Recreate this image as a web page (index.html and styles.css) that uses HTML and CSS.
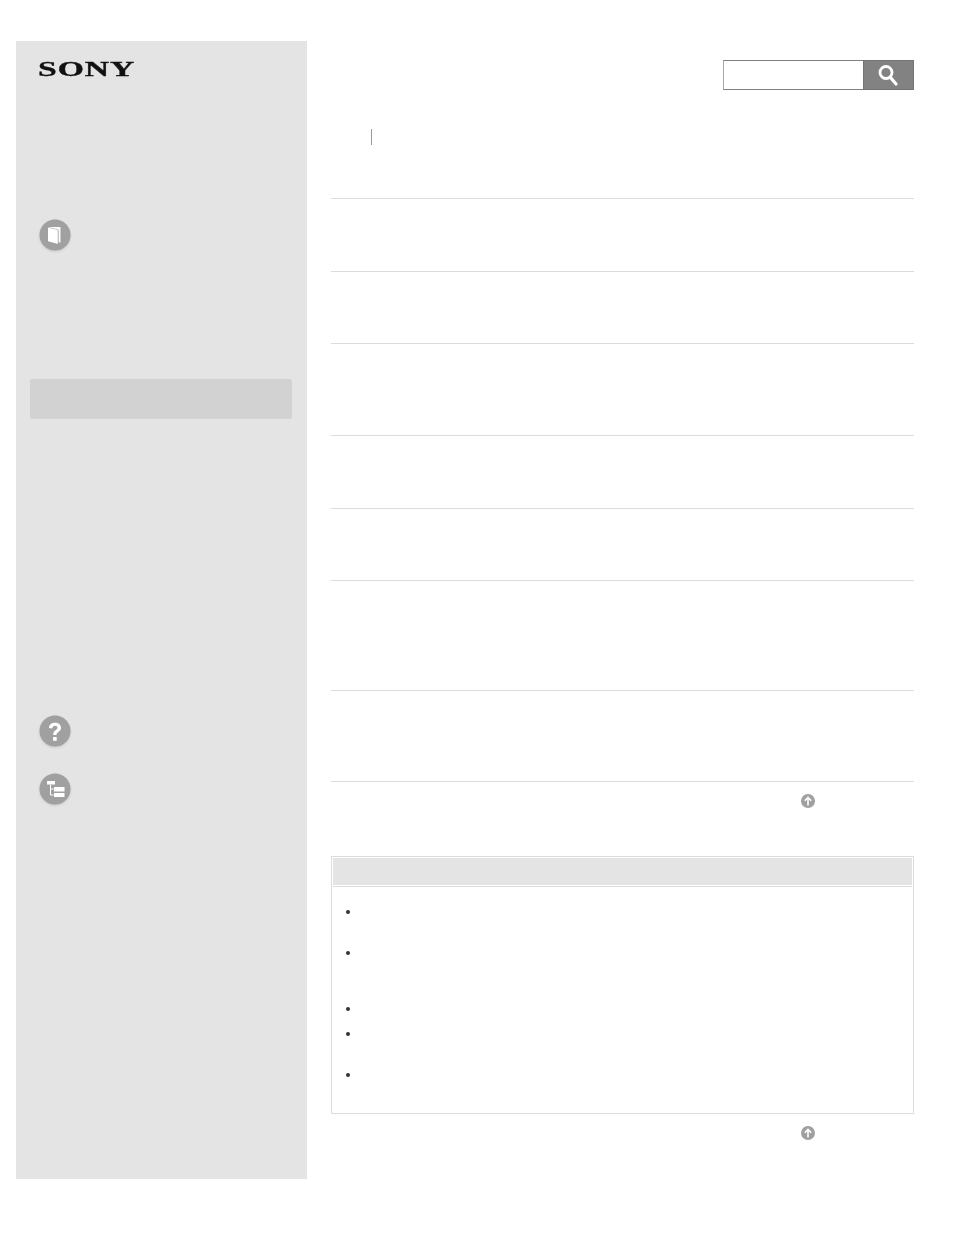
FILE: index.html
```html
<!DOCTYPE html>
<html lang="en">
<head>
<meta charset="utf-8">
<title>Sony Help Guide</title>
<link rel="stylesheet" href="styles.css">
</head>
<body>
<div class="page">
  <aside class="sidebar">
    <div class="logo">SONY</div>
    <div class="nav-icon nav-book">
      <svg viewBox="0 0 32 32" width="32" height="32">
        <circle cx="16" cy="16" r="15.5" fill="#a0a0a0"/>
        <path d="M9 8h12.500v15.500H19V10.500z" fill="#fff" opacity=".95"/>
        <path d="M9 8.500l10 2.500v14l-10-2.800z" fill="#fff"/>
        <path d="M19.200 11v14" stroke="#a0a0a0" stroke-width=".8"/>
      </svg>
    </div>
    <div class="nav-selected"></div>
    <div class="nav-icon nav-help">
      <svg viewBox="0 0 32 32" width="32" height="32">
        <circle cx="16" cy="16" r="15.5" fill="#a0a0a0"/>
        <path d="M10 13c0-3.300 2.500-5.300 6-5.300 3.600 0 6 2 6 5 0 2.200-1.200 3.200-2.700 4.300-1.300.9-1.800 1.500-1.800 3h-3.300c0-2.400.8-3.600 2.300-4.700 1.200-.9 2-1.500 2-2.500 0-1.200-.9-2-2.400-2-1.600 0-2.700 1-2.800 2.600z" fill="#fff"/>
        <rect x="14.100" y="22" width="3.600" height="3.800" fill="#fff"/>
      </svg>
    </div>
    <div class="nav-icon nav-tree">
      <svg viewBox="0 0 32 32" width="32" height="32">
        <circle cx="16" cy="16" r="15.500" fill="#a0a0a0"/>
        <rect x="8" y="8" width="8" height="3.500" fill="#fff"/>
        <rect x="15" y="14" width="10.500" height="4.500" fill="#fff"/>
        <rect x="15" y="20" width="10.500" height="4" fill="#fff"/>
        <path d="M11.500 11.500v10.500h3M11.500 16h3" fill="none" stroke="#fff" stroke-width="1"/>
      </svg>
    </div>
  </aside>
  <main class="content">
    <header class="topbar">
      <form class="search">
        <input class="search-input" type="text" aria-label="Search">
        <button class="search-button" type="button" aria-label="Search">
          <svg viewBox="0 0 24 24" width="24" height="24">
            <circle cx="9" cy="9.500" r="6" fill="none" stroke="#fff" stroke-width="2.800"/>
            <path d="M13.500 14.500l5.500 6.500" stroke="#fff" stroke-width="3.200" stroke-linecap="round"/>
          </svg>
        </button>
      </form>
    </header>
    <div class="crumbs"><span class="crumb-sep"></span></div>
    <div class="rows">
      <div class="row row-s"></div>
      <div class="row row-t"></div>
      <div class="row row-m"></div>
      <div class="row row-s"></div>
      <div class="row row-t"></div>
      <div class="row row-l"></div>
      <div class="row row-m2"></div>
    </div>
    <div class="top-link top-link-first">
      <svg class="up" viewBox="0 0 14 14" width="14" height="14">
        <circle cx="7" cy="7" r="7" fill="#a0a0a0"/>
        <path d="M7 11.500V3.500M3.800 6.800L7 3.500l3.200 3.300" fill="none" stroke="#fff" stroke-width="1.600"/>
      </svg>
    </div>
    <section class="panel">
      <div class="panel-head"></div>
      <ul class="notes">
        <li class="note note-a"></li>
        <li class="note note-b"></li>
        <li class="note note-c"></li>
        <li class="note note-a"></li>
        <li class="note note-d"></li>
      </ul>
    </section>
    <div class="top-link top-link-last">
      <svg class="up" viewBox="0 0 14 14" width="14" height="14">
        <circle cx="7" cy="7" r="7" fill="#a0a0a0"/>
        <path d="M7 11.500V3.500M3.800 6.800L7 3.500l3.200 3.300" fill="none" stroke="#fff" stroke-width="1.600"/>
      </svg>
    </div>
  </main>
</div>
</body>
</html>
```
FILE: styles.css
```css
* { box-sizing: border-box; }
html, body { margin: 0; padding: 0; background: #fff; }
body { font-family: "Liberation Sans", Arial, sans-serif; color: #333; }

.page {
  display: flex;
  align-items: flex-start;
  width: 954px;
  height: 1235px;
  padding: 41px 0 0 16px;
  overflow: hidden;
}

.sidebar {
  flex: 0 0 291px;
  height: 1138px;
  background: #e4e4e4;
  padding: 0 15px 0 14px;
}

.logo {
  width: 70px;
  margin: 13px 0 0 8px;
  font-family: "Liberation Serif", "Times New Roman", serif;
  font-weight: 700;
  font-size: 22px;
  line-height: 30px;
  letter-spacing: .6px;
  color: #111;
  -webkit-text-stroke: .35px #111;
  transform: scaleX(1.53);
  transform-origin: left center;
}

.nav-icon { width: 32px; height: 32px; margin-left: 9px; }
.nav-icon svg { display: block; filter: drop-shadow(0 1px 1px rgba(0,0,0,.12)); }
.nav-book { margin-top: 135px; }
.nav-help { margin-top: 296px; }
.nav-tree { margin-top: 26px; }

.nav-selected {
  height: 40px;
  margin-top: 128px;
  background: #d2d2d2;
  border-radius: 2px;
}

.content { flex: 0 0 583px; margin-left: 24px; }

.topbar { display: flex; justify-content: flex-end; padding-top: 19px; }
.search { display: flex; width: 191px; height: 30px; margin: 0; }
.search-input {
  width: 140px;
  height: 30px;
  margin: 0;
  padding: 0;
  background: #fff;
  border: 1px solid #808080;
  border-right: 0;
  border-left-color: #a8a8a8;
  border-radius: 0;
}
.search-button {
  display: flex;
  align-items: center;
  justify-content: center;
  width: 51px;
  height: 30px;
  margin: 0;
  padding: 0;
  background: #828282;
  border: 1px solid #747474;
  border-radius: 0;
}

.crumbs { height: 108px; padding: 39px 0 0 40px; }
.crumb-sep { display: block; width: 1px; height: 16px; background: #999; }

.rows { border-top: 1px solid #dcdcdc; }
.row { border-bottom: 1px solid #dcdcdc; }
.row-s { height: 73px; }
.row-t { height: 72px; }
.row-m { height: 92px; }
.row-l { height: 110px; }
.row-m2 { height: 91px; }

.top-link { display: flex; padding-left: 470px; }
.top-link-first { padding-top: 12px; height: 74px; }
.top-link-last { padding-top: 12px; }
.up { display: block; }

.panel {
  height: 258px;
  border: 1px solid #dcdcdc;
  padding: 1px;
}
.panel-head {
  height: 27px;
  background: #e4e4e4;
  box-shadow: 0 1px 0 #fff, 0 2px 0 #dcdcdc;
  margin: 0 0 2px;
}

.notes { list-style: none; margin: 0; padding: 23px 0 0 13px; }
.note { position: relative; }
.note::before {
  content: "";
  position: absolute;
  left: 0;
  top: 0;
  width: 4px;
  height: 4px;
  border-radius: 50%;
  background: #333;
}
.note-a { height: 41px; }
.note-b { height: 56px; }
.note-c { height: 25px; }
.note-d { height: 41px; }
```
